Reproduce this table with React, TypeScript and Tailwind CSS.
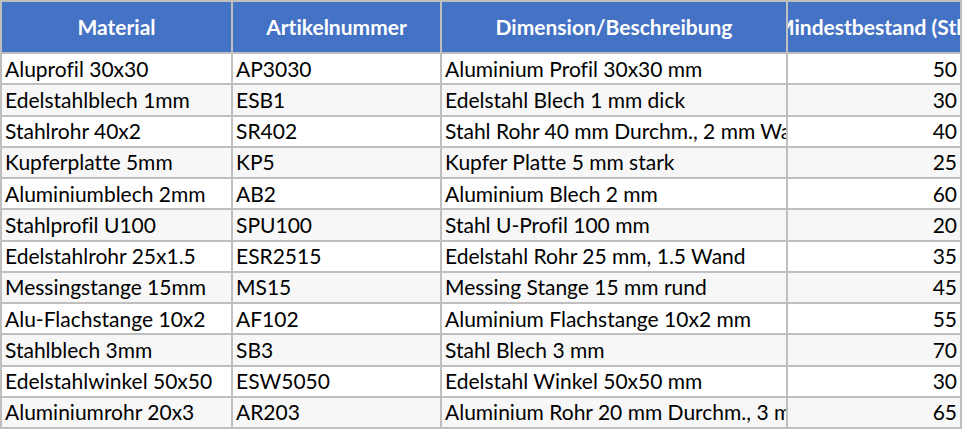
const rows: [string, string, string, number][] = [
  ["Aluprofil 30x30", "AP3030", "Aluminium Profil 30x30 mm", 50],
  ["Edelstahlblech 1mm", "ESB1", "Edelstahl Blech 1 mm dick", 30],
  ["Stahlrohr 40x2", "SR402", "Stahl Rohr 40 mm Durchm., 2 mm Wand", 40],
  ["Kupferplatte 5mm", "KP5", "Kupfer Platte 5 mm stark", 25],
  ["Aluminiumblech 2mm", "AB2", "Aluminium Blech 2 mm", 60],
  ["Stahlprofil U100", "SPU100", "Stahl U-Profil 100 mm", 20],
  ["Edelstahlrohr 25x1.5", "ESR2515", "Edelstahl Rohr 25 mm, 1.5 Wand", 35],
  ["Messingstange 15mm", "MS15", "Messing Stange 15 mm rund", 45],
  ["Alu-Flachstange 10x2", "AF102", "Aluminium Flachstange 10x2 mm", 55],
  ["Stahlblech 3mm", "SB3", "Stahl Blech 3 mm", 70],
  ["Edelstahlwinkel 50x50", "ESW5050", "Edelstahl Winkel 50x50 mm", 30],
  ["Aluminiumrohr 20x3", "AR203", "Aluminium Rohr 20 mm Durchm., 3 mm Wand", 65],
];

const headers = ["Material", "Artikelnummer", "Dimension/Beschreibung", "Mindestbestand (Stk)"];

const cell = "border-2 border-[#bfbfbf] p-0 h-[31.25px]";
const text = "overflow-hidden whitespace-nowrap leading-[26px]";

export default function App() {
  return (
    <div className="w-[962px] bg-white font-['Lato','Liberation_Sans',sans-serif] text-[21px] text-black [font-variant-ligatures:none]">
      <table className="w-[962px] table-fixed border-collapse">
        <colgroup>
          <col className="w-[231px]" />
          <col className="w-[209px]" />
          <col className="w-[346px]" />
          <col className="w-[174px]" />
        </colgroup>
        <thead>
          <tr>
            {headers.map((h) => (
              <th key={h} className="h-[52px] border-2 border-[#bfbfbf] bg-[#4472c4] p-0 font-bold text-white">
                <div className="flex justify-center overflow-hidden whitespace-nowrap leading-[28px]">
                  <span className="shrink-0">{h}</span>
                </div>
              </th>
            ))}
          </tr>
        </thead>
        <tbody>
          {rows.map(([mat, art, dim, qty], i) => (
            <tr key={art} className={i % 2 ? "bg-[#f7f7f7]" : "bg-white"}>
              <td className={cell}>
                <div className={`${text} pl-[3px]`}>{mat}</div>
              </td>
              <td className={cell}>
                <div className={`${text} pl-[3px]`}>{art}</div>
              </td>
              <td className={cell}>
                <div className={`${text} pl-[3px]`}>{dim}</div>
              </td>
              <td className={cell}>
                <div className={`${text} pr-[3px] text-right`}>{qty}</div>
              </td>
            </tr>
          ))}
        </tbody>
      </table>
    </div>
  );
}
